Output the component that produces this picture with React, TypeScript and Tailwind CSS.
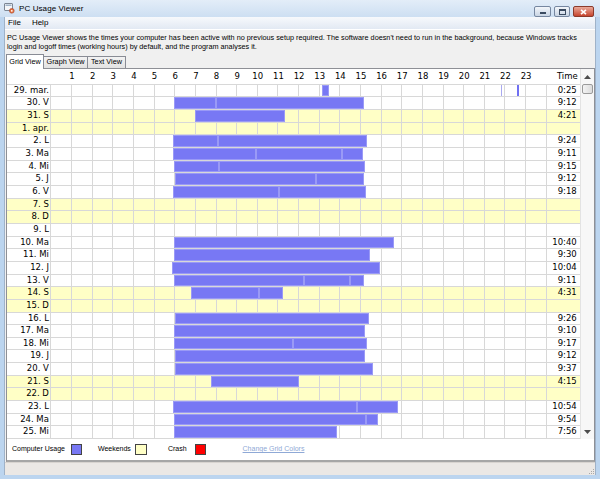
import React from 'react';

type Row = { d: string; we?: boolean; t?: string; b?: number[][] };

const X0 = 51.4;

const rows: Row[] = [
  { d: '29. mar.', t: '0:25', b: [[321.7, 329]] },
  { d: '30. V', t: '9:12', b: [[174, 216, 364]] },
  { d: '31. S', we: true, t: '4:21', b: [[195, 285]] },
  { d: '1. apr.', we: true },
  { d: '2. L', t: '9:24', b: [[173.3, 217.7, 367.5]] },
  { d: '3. Ma', t: '9:11', b: [[173.3, 256, 341.7, 363.5]] },
  { d: '4. Mi', t: '9:15', b: [[174, 219, 365]] },
  { d: '5. J', t: '9:12', b: [[175, 315.7, 363.7]] },
  { d: '6. V', t: '9:18', b: [[173.3, 279.3, 365.7]] },
  { d: '7. S', we: true },
  { d: '8. D', we: true },
  { d: '9. L' },
  { d: '10. Ma', t: '10:40', b: [[174, 394]] },
  { d: '11. Mi', t: '9:30', b: [[174, 370]] },
  { d: '12. J', t: '10:04', b: [[172, 380]] },
  { d: '13. V', t: '9:11', b: [[174, 304, 350, 364]] },
  { d: '14. S', we: true, t: '4:31', b: [[191, 259, 283]] },
  { d: '15. D', we: true },
  { d: '16. L', t: '9:26', b: [[175, 369]] },
  { d: '17. Ma', t: '9:10', b: [[174, 365]] },
  { d: '18. Mi', t: '9:17', b: [[174, 293, 367]] },
  { d: '19. J', t: '9:12', b: [[175, 365]] },
  { d: '20. V', t: '9:37', b: [[175, 373]] },
  { d: '21. S', we: true, t: '4:15', b: [[211, 299]] },
  { d: '22. D', we: true },
  { d: '23. L', t: '10:54', b: [[173, 357, 398]] },
  { d: '24. Ma', t: '9:54', b: [[174, 366, 378]] },
  { d: '25. Mi', t: '7:56', b: [[174, 337]] },
];

const hours = Array.from({ length: 24 }, (_, i) => i);

function GridRow({ r, idx }: { r: Row; idx: number }) {
  const bg = r.we ? 'bg-[#ffffc6]' : 'bg-white';
  return (
    <div className={`flex h-[12.67px] border-b border-[#d8d8d8] ${bg}`}>
      <div className="w-[44.4px] shrink-0 border-r border-[#d8d8d8] pr-[1.5px] text-right leading-[11.67px]">
        {r.d}
      </div>
      <div className="relative flex shrink-0">
        {hours.map((h) => (
          <div key={h} className="w-[20.65px] shrink-0 border-r border-[#d8d8d8]" />
        ))}
        {(r.b || []).map((bar, bi) =>
          bar.slice(0, -1).map((x, si) => (
            <div
              key={`${bi}-${si}`}
              className="absolute top-0 bottom-0 border border-[#9a9af6] bg-[#7878f4]"
              style={{ left: x - X0, width: bar[si + 1] - x }}
            />
          ))
        )}
        {idx === 0 && (
          <>
            <div className="absolute top-0 bottom-0 w-px bg-[#a9a9f0]" style={{ left: 501 - X0 }} />
            <div className="absolute top-0 bottom-0 w-[2px] bg-[#7070f2]" style={{ left: 517 - X0 }} />
          </>
        )}
      </div>
      <div className="w-[33px] shrink-0 pr-[3px] text-right leading-[11.67px]">{r.t || ''}</div>
    </div>
  );
}

function Scrollbar() {
  return (
    <div className="flex w-[14px] shrink-0 flex-col border-l border-[#e3e3e3] bg-[#f7f7f7]">
      <div className="flex h-[15px] items-center justify-center">
        <svg width="7" height="4" viewBox="0 0 7 4">
          <path d="M0 4 L3.5 0 L7 4 Z" fill="#4d4d4d" />
        </svg>
      </div>
      <div className="mx-[1px] h-[10px] rounded-[2px] border border-[#9a9a9a] bg-gradient-to-r from-[#f3f3f3] to-[#dcdcdc]" />
      <div className="flex-1" />
      <div className="flex h-[15px] items-center justify-center">
        <svg width="7" height="4" viewBox="0 0 7 4">
          <path d="M0 0 L3.5 4 L7 0 Z" fill="#4d4d4d" />
        </svg>
      </div>
    </div>
  );
}

export default function App() {
  return (
    <div className="relative flex h-[479px] w-[600px] flex-col overflow-hidden bg-[#bcd5ef] font-['Liberation_Sans',Arial,sans-serif] text-black">
      {/* title bar */}
      <div className="flex h-[17px] shrink-0 items-start bg-gradient-to-b from-[#e3edf8] to-[#cddff2]">
        <div className="ml-[4px] mt-[3px]">
          <svg width="11" height="11" viewBox="0 0 11 11">
            <rect x="0.5" y="0.5" width="8" height="7" rx="0.5" fill="#f4f6f8" stroke="#7d8794" />
            <rect x="1.5" y="1.5" width="6" height="1.5" fill="#9fb3c8" />
            <circle cx="7.8" cy="7.8" r="2.4" fill="#e4713f" stroke="#a9442a" strokeWidth="0.6" />
            <circle cx="7.8" cy="7.8" r="0.9" fill="#fff" />
          </svg>
        </div>
        <div className="ml-[4px] mt-[4px] text-[8px] leading-[10px] tracking-[0.1px]">PC Usage Viewer</div>
        <div className="ml-auto mr-[6px] mt-[6px] flex gap-[3px]">
          <div className="flex h-[11px] w-[17px] items-end justify-center rounded-[2px] border border-[#7687a0] bg-gradient-to-b from-[#f3f6fa] to-[#c9d5e4] pb-[2px]">
            <div className="h-[2px] w-[6px] bg-[#3b4b60]" />
          </div>
          <div className="flex h-[11px] w-[16px] items-center justify-center rounded-[2px] border border-[#7687a0] bg-gradient-to-b from-[#f3f6fa] to-[#c9d5e4]">
            <div className="h-[6px] w-[7px] border border-t-2 border-[#3b4b60]" />
          </div>
          <div className="flex h-[11px] w-[21px] items-center justify-center rounded-[2px] border border-[#8b3a2b] bg-gradient-to-b from-[#e9a899] to-[#c5432d]">
            <svg width="7" height="6" viewBox="0 0 7 6">
              <path d="M1 0.8 L6 5.2 M6 0.8 L1 5.2" stroke="#fff" strokeWidth="1.6" />
            </svg>
          </div>
        </div>
      </div>

      {/* client area */}
      <div className="mx-[4px] flex flex-1 flex-col border-x border-[#9fb2c8] bg-[#f0f0f0]">
        {/* menu */}
        <div className="flex h-[13px] shrink-0 items-center gap-[11px] border-b border-[#ffffff] bg-gradient-to-b from-[#f7f9fc] to-[#e2e9f3] pl-[3px] text-[8px]">
          <span>File</span>
          <span>Help</span>
        </div>
        {/* description */}
        <div className="h-[23px] shrink-0 pl-[2px] pt-[3px] text-[7.27px] leading-[9px]">
          <div className="whitespace-nowrap">
            PC Usage Viewer shows the times your computer has been active with no previous setup required. The software doesn't need to run in the background, because Windows tracks
          </div>
          <div className="whitespace-nowrap">
            login and logoff times (working hours) by default, and the program analyses it.
          </div>
        </div>
        {/* tabs */}
        <div className="flex h-[15px] shrink-0 items-end pl-[1px] text-[7.3px]">
          <div className="relative z-10 -mb-px flex h-[15px] w-[38px] items-center justify-center border border-b-0 border-[#898c95] bg-white">
            Grid View
          </div>
          <div className="flex h-[12px] w-[44px] items-center justify-center border border-l-0 border-b-0 border-[#898c95] bg-gradient-to-b from-[#f3f3f3] to-[#e2e2e2]">
            Graph View
          </div>
          <div className="flex h-[12px] w-[38px] items-center justify-center border border-l-0 border-b-0 border-[#898c95] bg-gradient-to-b from-[#f3f3f3] to-[#e2e2e2]">
            Text View
          </div>
        </div>
        {/* panel */}
        <div className="ml-[1px] mr-[0px] flex h-[394px] shrink-0 flex-col border border-b-2 border-[#8e9096] border-b-[#a6a6a6] bg-white">
          <div className="flex shrink-0">
            <div className="flex flex-col font-['DejaVu_Sans',sans-serif] text-[8.5px]">
              {/* header */}
              <div className="flex h-[15.7px] border-b border-[#d8d8d8] leading-[15px]">
                <div className="w-[54.7px] shrink-0" />
                {hours.slice(0, 23).map((h) => (
                  <div key={h} className="w-[20.65px] shrink-0 text-center">
                    {h + 1}
                  </div>
                ))}
                <div className="w-[10.3px] shrink-0" />
                <div className="w-[33px] shrink-0 pr-[2px] text-right">Time</div>
              </div>
              {rows.map((r, i) => (
                <GridRow key={i} r={r} idx={i} />
              ))}
            </div>
            <Scrollbar />
          </div>
          {/* legend */}
          <div className="flex flex-1 items-center pl-[5px] text-[7px]">
            <span>Computer Usage</span>
            <div className="ml-[6px] h-[11px] w-[11px] border border-[#444] bg-[#7878f4]" />
            <span className="ml-[16px]">Weekends</span>
            <div className="ml-[4px] h-[11px] w-[12px] border border-[#444] bg-[#ffffc6]" />
            <span className="ml-[21px]">Crash</span>
            <div className="ml-[8px] h-[11px] w-[11px] border border-[#444] bg-[#ff0000]" />
            <span className="ml-[37px] text-[#8fa9d6] underline">Change Grid Colors</span>
          </div>
        </div>
        {/* status bar */}
        <div className="relative flex-1 border-t border-[#d8d4d0] bg-[#ebe8e5]">
          <div className="absolute bottom-[1px] right-[1px] grid grid-cols-3 gap-[1px]">
            <div className="h-[1px] w-[1px]" />
            <div className="h-[1px] w-[1px]" />
            <div className="h-[1px] w-[1px] bg-[#a8a8a8]" />
            <div className="h-[1px] w-[1px]" />
            <div className="h-[1px] w-[1px] bg-[#a8a8a8]" />
            <div className="h-[1px] w-[1px] bg-[#a8a8a8]" />
            <div className="h-[1px] w-[1px] bg-[#a8a8a8]" />
            <div className="h-[1px] w-[1px] bg-[#a8a8a8]" />
            <div className="h-[1px] w-[1px] bg-[#a8a8a8]" />
          </div>
        </div>
      </div>
      <div className="h-[4px] shrink-0" />
    </div>
  );
}
